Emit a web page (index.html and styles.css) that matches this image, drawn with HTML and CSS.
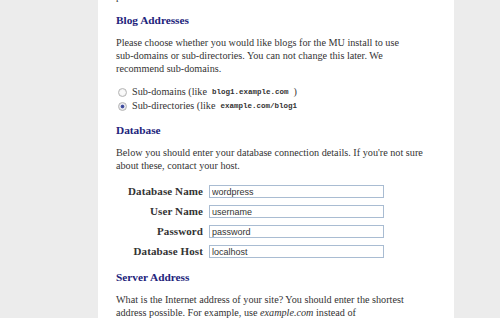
FILE: index.html
```html
<!DOCTYPE html>
<html lang="en">
<head>
  <meta charset="UTF-8" />
  <title>WordPress MU - Installation</title>
  <link rel="stylesheet" href="styles.css">
</head>
<body>

  <div class="container">
    <p class="intro">proceed.</p>

    <!-- blog addresses -->
    <h2>Blog Addresses</h2>
    <p>Please choose whether you would like blogs for the MU install to use <span class="nowrap">sub-domains</span> or <span class="nowrap">sub-directories</span>. You can not change this later. We recommend <span class="nowrap">sub-domains</span>.</p>
    <div class="choices">
      <label><input type="radio" name="vhost" value="yes" /> Sub-domains (like <code>blog1.example.com</code>)</label>
      <label><input type="radio" name="vhost" value="no" checked /> Sub-directories (like <code>example.com/blog1</code></label>
    </div>

    <!-- database -->
    <h2>Database</h2>
    <p>Below you should enter your database connection details. If you're not sure about these, contact your host.</p>
    <div class="fields">
      <label for="dbname">Database Name</label>
      <input type="text" id="dbname" value="wordpress" />
      <label for="uname">User Name</label>
      <input type="text" id="uname" value="username" />
      <label for="pwd">Password</label>
      <input type="text" id="pwd" value="password" />
      <label for="dbhost">Database Host</label>
      <input type="text" id="dbhost" value="localhost" />
    </div>

    <!-- server address -->
    <h2>Server Address</h2>
    <p>What is the Internet address of your site? You should enter the shortest address possible. For example, use <em>example.com</em> instead of <em>www.example.com</em>.</p>
  </div>

</body>
</html>
```

FILE: styles.css
```css
* {
  margin: 0;
  padding: 0;
  box-sizing: border-box;
}

body {
  background: #ececec;
  font-family: 'Liberation Serif', 'Times New Roman', serif;
  font-size: 10.2px;
  color: #333;
  height: 318px;
  overflow: hidden;
}

.container {
  background: white;
  width: 356px;
  margin-left: 98px;
  margin-top: -10px;
  padding: 0 26px 20px 18px;
}

.intro {
  line-height: 13px;
  margin-bottom: 0;
}

.nowrap {
  white-space: nowrap;
}

h2 {
  font-size: 11.3px;
  line-height: 16px;
  font-weight: bold;
  color: #22237b;
  margin-top: 9px;
  margin-bottom: 8px;
}

p {
  line-height: 13px;
  margin-bottom: 10px;
}

.choices {
  padding-left: 2px;
  margin-bottom: 9px;
}

.choices label {
  display: flex;
  align-items: center;
  gap: 5px;
  line-height: 14px;
}

code {
  font-family: 'Liberation Mono', monospace;
  font-size: 7.5px;
  font-weight: bold;
}

input[type="radio"] {
  appearance: none;
  width: 9px;
  height: 9px;
  border-radius: 50%;
  border: 1px solid #b5b5b5;
  background: radial-gradient(circle, #fafafa 40%, #e3e3e3 100%);
  margin: 0;
}

input[type="radio"]:checked {
  background: radial-gradient(circle, #34408f 0, #4b58a8 30%, #e6e6ee 45%, #e3e3e3 100%);
}

.fields {
  display: grid;
  grid-template-columns: 87px 175px;
  column-gap: 6px;
  row-gap: 7px;
  align-items: center;
  margin-top: 13px;
  margin-bottom: 11px;
}

.fields label {
  text-align: right;
  font-weight: bold;
  font-size: 11px;
  line-height: 13px;
  letter-spacing: 0.1px;
}

.fields input {
  height: 13px;
  border: 1px solid #a9bcd2;
  font-family: 'Liberation Sans', Arial, sans-serif;
  font-size: 9px;
  color: #333;
  padding: 0 2px;
  outline: none;
}
```
